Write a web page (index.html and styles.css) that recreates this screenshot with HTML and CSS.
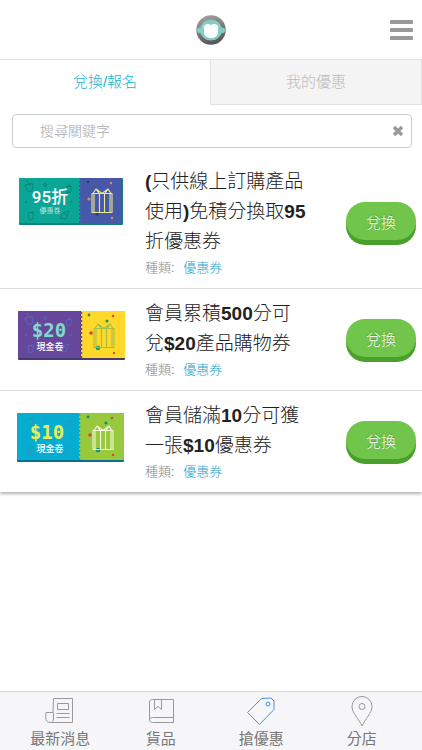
FILE: index.html
```html
<!DOCTYPE html>
<html lang="zh-Hant">
<head>
<meta charset="utf-8">
<meta name="viewport" content="width=device-width, initial-scale=1">
<title>搶優惠</title>
<link rel="stylesheet" href="styles.css">
</head>
<body>
<svg class="defs" aria-hidden="true">
  <defs>
    <g id="gift" fill="none" stroke-width="1.1" stroke-linejoin="round">
      <path d="M0 6.500h20v19H0zM7.500 6.500v19M12.500 6.500v19M2 7v18M18 7v18M1 6.500 4 2l6 4.500L16 2l3 4.500M4 2 7 6.500M16 2 13 6.500"/>
    </g>
    <g id="doodles" fill="none" stroke-width="0.900">
      <path d="m8 8 6-2 2 1-1 7-4 1zM8 8l7-1M11 6l-1-3M49 10l5-1v6l-4 1zM49 10l5-1M52 9V7M11 36l5-1v7l-4 1zM11 36l5-1M46 36l6-2-3 8-6-1zM46 36l5 3"/>
      <circle cx="28" cy="8" r="1.500"/><circle cx="54" cy="25" r="1"/><circle cx="9" cy="25" r=".8"/>
    </g>
  </defs>
</svg>
<div class="app">
  <header class="topbar">
    <a class="logo" href="#" aria-label="主頁">
      <svg viewBox="0 0 30 30" width="30" height="30">
        <defs><linearGradient id="ring" x1="0" y1="0" x2=".3" y2="1"><stop offset="0" stop-color="#aaa5a6"/><stop offset="1" stop-color="#5c595b"/></linearGradient></defs>
        <circle cx="15" cy="15" r="14.700" fill="url(#ring)"/>
        <path d="M4.500 12.500C6 7.500 10 4.800 15 4.800s9 2.700 10.500 7.700c2 0 3.500 1 4 2.500-.3 2-1.800 3.300-4 3.300C23.500 23 20 25.500 15 25.500S6.500 23 4.500 18.300c-2.200 0-3.700-1.300-4-3.300.5-1.500 2-2.500 4-2.500z" fill="#82cdc5"/>
        <path d="M15 10.500c1-1.300 2.700-1.700 4.300-1.300 2.600.6 3.700 3 2.700 5.300-.3.700-.1 1.300 0 2 .6 3.800-2.500 6.500-7 6.500s-7.600-2.700-7-6.500c.1-.7.300-1.300 0-2-1-2.300.1-4.700 2.700-5.300 1.600-.4 3.300 0 4.300 1.300z" fill="#fff"/>
      </svg>
    </a>
    <button class="menu" type="button" aria-label="選單"><span></span><span></span><span></span></button>
  </header>

  <nav class="tabs">
    <a class="tab tab-active" href="#">兌換/報名</a>
    <a class="tab" href="#">我的優惠</a>
  </nav>

  <main>
    <form class="search">
      <input class="search-input" type="text" placeholder="搜尋關鍵字" aria-label="搜尋關鍵字">
      <button class="search-clear" type="reset" aria-label="清除">
        <svg viewBox="0 0 12 12" width="12" height="12"><path d="m2 2 8 8M10 2l-8 8" stroke="#999" stroke-width="3.400"/></svg>
      </button>
    </form>

    <ul class="offers">
      <li class="offer">
        <svg class="ticket" viewBox="0 1 108 50" role="img" aria-label="95折優惠卷">
          <rect x="2" y="1" width="104" height="47" rx="1" fill="#0f7f80"/>
          <path d="M2 1h60v45H2z" fill="#0ca697"/>
          <path d="M62 1h43v45H62z" fill="#4858a8"/>
          <path d="M62 2v44" stroke="#0ca697" stroke-width="2.500" stroke-dasharray="2 2"/>
          <use href="#doodles" stroke="#078476"/>
          <circle cx="71" cy="5" r="1.200" fill="#2b3777"/><circle cx="94" cy="6" r="1.200" fill="#e98b4d"/><circle cx="72" cy="22" r="1.600" fill="#e98b4d"/><circle cx="95" cy="41" r="1.200" fill="#e98b4d"/><circle cx="80" cy="37" r="1.700" fill="#303d87"/>
          <use href="#gift" x="75" y="10" stroke="#e9e98e"/>
          <text class="t-rate" x="33" y="26">95折</text>
          <text class="t-sub" x="33" y="36">優惠卷</text>
        </svg>
        <div class="info">
          <h2 class="title"><b>(</b>只供線上訂購產品使用<b>)</b>免積分換取<b>95</b>折優惠券</h2>
          <p class="meta">種類: <a href="#">優惠券</a></p>
        </div>
        <button class="redeem" type="button">兌換</button>
      </li>
      <li class="offer">
        <svg class="ticket" viewBox="0 0 108 50" role="img" aria-label="$20現金卷">
          <rect x="1" y="1" width="107" height="49" rx="1" fill="#493a70"/>
          <path d="M1 1h62v47H1z" fill="#67479c"/>
          <path d="M64 1h44v47H64z" fill="#ffd829"/>
          <path d="M64 2v46" stroke="#67479c" stroke-width="2.500" stroke-dasharray="2 2"/>
          <use href="#doodles" stroke="#5269bd"/>
          <circle cx="72" cy="5" r="1.400" fill="#149b66"/><circle cx="96" cy="6" r="1.300" fill="#e04635"/><circle cx="74" cy="23" r="1.800" fill="#e63b39"/><circle cx="90" cy="11" r="1.600" fill="#149b66"/><circle cx="97" cy="43" r="1.200" fill="#e04635"/><circle cx="81" cy="38" r="2.300" fill="#149b66"/>
          <use href="#gift" x="77" y="12" stroke="#a3bd49"/>
          <text class="t-cash t-mint" x="32" y="27">$20</text>
          <text class="t-label" x="33" y="40">現金卷</text>
        </svg>
        <div class="info">
          <h2 class="title">會員累積<b>500</b>分可兌<b>$20</b>產品購物券</h2>
          <p class="meta">種類: <a href="#">優惠券</a></p>
        </div>
        <button class="redeem" type="button">兌換</button>
      </li>
      <li class="offer">
        <svg class="ticket" viewBox="0 0 108 50" role="img" aria-label="$10現金卷">
          <rect x="0" y="1" width="107" height="49" rx="1" fill="#08708d"/>
          <path d="M0 1h62v47H0z" fill="#05add0"/>
          <path d="M62 1h45v47H62z" fill="#98c83b"/>
          <path d="M62 2v46" stroke="#05add0" stroke-width="2.500" stroke-dasharray="2 2"/>
          <use href="#doodles" stroke="#2797bd"/>
          <circle cx="71" cy="5" r="1.400" fill="#108f77"/><circle cx="95" cy="6" r="1.300" fill="#c84c39"/><circle cx="73" cy="23" r="1.800" fill="#de4439"/><circle cx="89" cy="11" r="1.600" fill="#108f77"/><circle cx="96" cy="43" r="1.200" fill="#c84c39"/><circle cx="81" cy="38" r="2.300" fill="#108f77"/>
          <use href="#gift" x="76" y="12" stroke="#f3f9df"/>
          <text class="t-cash t-lime" x="30" y="27">$10</text>
          <text class="t-label" x="33" y="40">現金卷</text>
        </svg>
        <div class="info">
          <h2 class="title">會員儲滿<b>10</b>分可獲一張<b>$10</b>優惠券</h2>
          <p class="meta">種類: <a href="#">優惠券</a></p>
        </div>
        <button class="redeem" type="button">兌換</button>
      </li>
    </ul>
  </main>

  <nav class="bottom">
    <a href="#">
      <svg class="icon" viewBox="0 0 30 32"><path d="M8.500 3.500h19v24h-22c-5 0-5-4-4.500-10h7zM8.500 17.500V24c0 2-1 3.500-3 3.500M12.500 8.500h11v6h-11zM11.500 18.500h13M11.500 22.500h13"/></svg>
      最新消息
    </a>
    <a href="#">
      <svg class="icon" viewBox="0 0 30 32"><path d="M6.500 4.500h21v23h-21c-4 0-4-5 0-5h21M3.500 25V7c0-1.500 1-2.500 3-2.500M8.500 4.500v10l3.500-3 3.500 3v-10"/></svg>
      貨品
    </a>
    <a href="#">
      <svg class="icon icon-active" viewBox="0 0 30 32"><path d="m1.500 17.500 14-14 9.500-.5L28 6v8.500L13.500 29.500z"/><circle cx="22" cy="9" r="2"/></svg>
      搶優惠
    </a>
    <a href="#">
      <svg class="icon" viewBox="0 0 30 32"><path d="M15 31C12 24 5 18 5 11.500a10 10 0 0 1 20 0C25 18 18 24 15 31z"/><circle cx="15" cy="11.500" r="3"/></svg>
      分店
    </a>
  </nav>
</div>
</body>
</html>
```
FILE: styles.css
```css
* {
  box-sizing: border-box;
}

body {
  margin: 0;
  background: #fff;
  color: #333;
  font-family: "Liberation Sans", "Noto Sans CJK TC", sans-serif;
  font-weight: 300;
}

a {
  color: inherit;
  text-decoration: none;
}

button {
  border: 0;
  padding: 0;
  background: none;
  font: inherit;
}

.defs {
  position: absolute;
  width: 0;
  height: 0;
}

.app {
  display: flex;
  flex-direction: column;
  min-height: 100vh;
}

.topbar {
  display: grid;
  grid-template-columns: 1fr auto 1fr;
  align-items: center;
  height: 59px;
  padding: 0 9px;
}

.logo {
  grid-column: 2;
  display: block;
  height: 30px;
}

.menu {
  justify-self: end;
  display: flex;
  flex-direction: column;
  gap: 4px;
}

.menu span {
  width: 23px;
  height: 4px;
  border-radius: 1px;
  background: #999;
}

.tabs {
  display: flex;
}

.tab {
  flex: 1;
  height: 46px;
  border: 1px solid #e2e2e2;
  background: #f4f4f4;
  color: #bbb;
  font-size: 15px;
  line-height: 44px;
  text-align: center;
}

.tab-active {
  border-width: 1px 0;
  border-bottom-color: #fff;
  background: #fff;
  color: #22b4cf;
}

.search {
  display: flex;
  align-items: center;
  height: 34px;
  margin: 9px 10px 9px 12px;
  padding: 0 7px 0 27px;
  border: 1px solid #ccc;
  border-radius: 4px;
}

.search-input {
  flex: 1;
  min-width: 0;
  padding: 0;
  border: 0;
  outline: 0;
  background: none;
  font: inherit;
  font-size: 14px;
}

.search-input::placeholder {
  color: #aaa;
}

.search-clear {
  display: flex;
}

.offers {
  margin: 0;
  padding: 0;
  list-style: none;
  box-shadow: 0 2px 3px rgba(0, 0, 0, 0.3);
}

.offer {
  display: grid;
  grid-template-columns: 108px 1fr 70px;
  align-items: center;
  padding: 10px 6px 9px 17px;
  border-bottom: 1px solid #ddd;
}

.offer:last-child {
  border-bottom: 0;
}

.ticket {
  align-self: start;
  width: 108px;
  height: 50px;
  margin-top: 11px;
}

.info {
  padding: 0 38px 0 20px;
}

.title {
  margin: 0;
  color: #222;
  font-size: 19px;
  font-weight: 300;
  line-height: 30px;
}

.title b {
  font-weight: 700;
}

.meta {
  margin: 0;
  color: #888;
  font-size: 13px;
  line-height: 22px;
}

.meta a {
  margin-left: 5px;
  color: #1ba3cc;
}

.redeem {
  height: 38px;
  margin-bottom: 4px;
  border-radius: 19px;
  background: #70c54a;
  box-shadow: 0 5px 0 #4aa02c;
  color: #fff;
  font-size: 15px;
  text-shadow: 0 -1px 1px #4aa02c;
}

.t-rate,
.t-sub,
.t-cash,
.t-label {
  fill: #fff;
  text-anchor: middle;
}

.t-rate {
  font: 500 17px Roboto, "Noto Sans CJK TC", sans-serif;
}

.t-sub {
  font-size: 7px;
}

.t-cash {
  font: 700 19px "DejaVu Sans Mono", monospace;
}

.t-label {
  font-size: 9px;
  font-weight: 500;
}

.t-mint {
  fill: #80d9ca;
}

.t-lime {
  fill: #e8ee58;
}

.bottom {
  display: flex;
  margin-top: auto;
  padding: 3px 10px 0;
  border-top: 1px solid #d5d5d8;
  background: #f6f6f9;
}

.bottom a {
  flex: 1;
  display: flex;
  flex-direction: column;
  align-items: center;
  color: #777;
  font-size: 15px;
  font-weight: 400;
  line-height: 23px;
}

.icon {
  width: 30px;
  height: 32px;
  fill: none;
  stroke: #999;
}

.icon-active {
  stroke: #3c91ee;
}
```
